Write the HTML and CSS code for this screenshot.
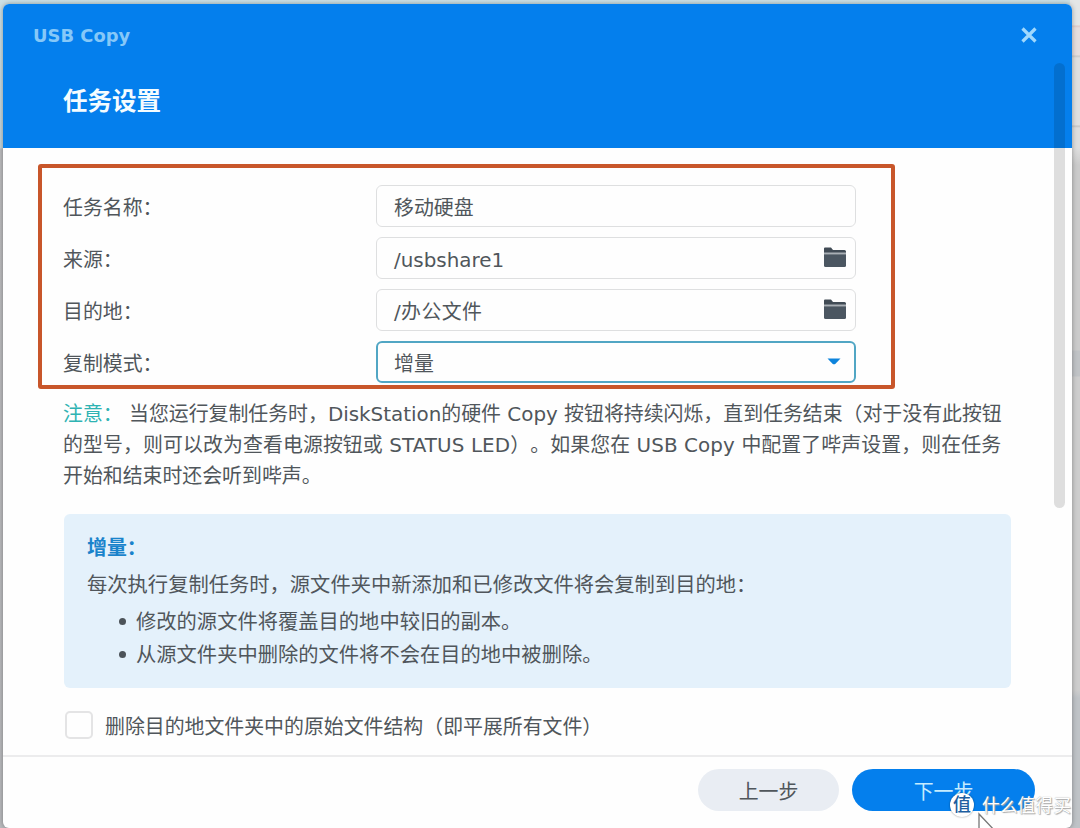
FILE: index.html
```html
<!DOCTYPE html>
<html lang="zh-CN">
<head>
<meta charset="utf-8">
<title>USB Copy</title>
<link rel="stylesheet" href="styles.css">
</head>
<body>
<div class="backdrop-right"></div>
<main class="dialog">
  <header class="header">
    <div class="titlebar">
      <span class="app-name">USB Copy</span>
      <svg class="close" width="18" height="18" viewBox="0 0 18 18"><path d="M2.500 2.500L15.500 15.500M15.500 2.500L2.500 15.500" stroke="#a0d8fd" stroke-width="3.200"/></svg>
    </div>
    <h1 class="page-title">任务设置</h1>
  </header>
  <section class="body">
    <div class="form">
      <div class="row"><label class="label">任务名称：</label><div class="field">移动硬盘</div></div>
      <div class="row"><label class="label">来源：</label><div class="field"><span>/usbshare1</span>
        <svg class="folder" width="22" height="20" viewBox="0 0 22 20"><path d="M0 6V1.500Q0 .5 1 .5H7L9 3H20.500Q22 3 22 4.500V6Z" fill="#414b55"/><path d="M0 5.500H22V7.200H0Z" fill="#a9afb5"/><path d="M0 7.200H22V18.500Q22 20 20.500 20H1.500Q0 20 0 18.500Z" fill="#4b5661"/></svg></div></div>
      <div class="row"><label class="label">目的地：</label><div class="field"><span class="path">/办公文件</span>
        <svg class="folder" width="22" height="20" viewBox="0 0 22 20"><path d="M0 6V1.500Q0 .5 1 .5H7L9 3H20.500Q22 3 22 4.500V6Z" fill="#414b55"/><path d="M0 5.500H22V7.200H0Z" fill="#a9afb5"/><path d="M0 7.200H22V18.500Q22 20 20.500 20H1.500Q0 20 0 18.500Z" fill="#4b5661"/></svg></div></div>
      <div class="row"><label class="label">复制模式：</label><div class="field field-active"><span>增量</span>
        <svg class="caret" width="14" height="7" viewBox="0 0 14 7"><path d="M.5 .5H13.500L8.500 5.700Q7 7 5.500 5.700Z" fill="#0d84dc"/></svg></div></div>
    </div>
    <div class="notice">
      <div class="line"><span class="note">注意：</span> 当您运行复制任务时，DiskStation的硬件 Copy 按钮将持续闪烁，直到任务结束（对于没有此按钮</div>
      <div class="line line-wide">的型号，则可以改为查看电源按钮或 STATUS LED）。如果您在 USB Copy 中配置了哔声设置，则在任务</div>
      <div class="line">开始和结束时还会听到哔声。</div>
    </div>
    <div class="info">
      <div class="info-title">增量：</div>
      <div class="info-text">每次执行复制任务时，源文件夹中新添加和已修改文件将会复制到目的地：</div>
      <ul class="list">
        <li>修改的源文件将覆盖目的地中较旧的副本。</li>
        <li>从源文件夹中删除的文件将不会在目的地中被删除。</li>
      </ul>
    </div>
    <div class="check-row"><span class="checkbox"></span><span class="check-label">删除目的地文件夹中的原始文件结构（即平展所有文件）</span></div>
  </section>
  <footer class="footer">
    <div class="button">上一步</div>
    <div class="button primary">下一步</div>
  </footer>
  <div class="scrollbar"></div>
</main>
<svg class="cursor" width="22" height="16" viewBox="0 0 22 16"><path d="M2 28V2L20 21" fill="#fff" stroke="#777" stroke-width="1.300"/></svg>
<div class="watermark"><span class="badge">值</span><span class="brand">什么值得买</span></div>
</body>
</html>
```
FILE: styles.css
```css
* { box-sizing: border-box; }
body {
  margin: 0;
  width: 1080px;
  height: 828px;
  overflow: hidden;
  position: relative;
  padding: 4px 9px 1px 3px;
  background: linear-gradient(#cce0e5 0, #c3d2d8 148px, #bcbcbe 149px, #b9babd 100%);
  font-family: "DejaVu Sans", "Noto Sans CJK SC", sans-serif;
  font-size: 19.9px;
  line-height: 30px;
  text-spacing-trim: space-all;
  color: #50565b;
}
.backdrop-right {
  position: absolute;
  left: 1070px;
  top: 0;
  width: 10px;
  height: 828px;
  background: linear-gradient(#e4e6e6 0 25px, #ddc9c8 26px, #e6dede 28px 55px, #c9c9c9 56px, #e0e0e0 58px 125px, #c4c4c4 126px, #dedede 128px 148px, #cbcbcb 165px 350px, #c0c3c6 351px 376px, #cdcdcd 377px 690px, #bfc3c7 698px 100%);
}
.dialog {
  position: relative;
  display: flex;
  flex-direction: column;
  width: 1069px;
  height: 824px;
  border-radius: 6px;
  background: #fefefe;
  overflow: hidden;
  box-shadow: 0 0 5px rgba(0, 0, 0, .35);
}
.header { height: 144px; flex: none; background: #047fed; padding: 18px 32px 0 30px; }
.titlebar { display: flex; align-items: center; justify-content: space-between; height: 26px; }
.app-name { padding-top: 2px; font-weight: 700; font-size: 17.900px; color: #86c8f8; }
.close { margin-right: 2px; }
.page-title { margin: 38px 0 0 30px; font-size: 24.500px; line-height: 32px; font-weight: 700; color: #f4fcff; }
.body { flex: none; height: 607px; padding: 16px 60px 0 35px; }
.form {
  width: 857px;
  height: 225px;
  border: 4px solid #c8562a;
  border-radius: 3px;
  padding: 17px 0 0 21px;
  display: flex;
  flex-direction: column;
  gap: 10px;
}
.row { display: flex; flex: none; height: 42px; align-items: center; }
.label { width: 313px; flex: none; padding-top: 6px; }
.field {
  width: 480px;
  height: 42px;
  border: 1px solid #dedfe0;
  border-radius: 6px;
  padding: 5px 9px 0 17px;
  display: flex;
  align-items: center;
  justify-content: space-between;
}
.path { letter-spacing: .4px; }
.folder { margin-top: -7px; }
.field-active { border: 2px solid #51a6c4; padding: 5px 13px 0 16px; }
.caret { margin-top: -6px; }
.notice { margin: 10px 0 0 25px; }
.line { height: 31px; line-height: 31px; white-space: nowrap; }
.line-wide { letter-spacing: .1px; }
.note { color: #2fb3b3; }
.info {
  margin: 22px 0 0 26px;
  width: 947px;
  height: 174px;
  border-radius: 6px;
  background: #e4f1fb;
  padding: 18px 23px 0;
}
.info-title { height: 33px; line-height: 34px; font-weight: 700; color: #1983cb; }
.info-text { height: 40px; line-height: 40px; font-size: 20.300px; white-space: nowrap; }
.list { margin: 0; padding: 0; list-style: none; font-size: 20.300px; }
.list li { display: flex; align-items: center; height: 33px; gap: 10px; padding-left: 32px; }
.list li::before { content: ""; width: 7px; height: 7px; border-radius: 50%; background: #4c5359; }
.check-row { display: flex; align-items: center; height: 30px; margin: 22px 0 0 27px; gap: 12px; }
.check-label { padding-top: 5px; }
.checkbox { width: 28px; height: 28px; border: 2px solid #e4e4e5; border-radius: 5px; }
.footer {
  flex: 1;
  display: flex;
  gap: 13px;
  justify-content: flex-end;
  padding: 12px 37px 0 0;
  border-top: 2px solid #ececed;
}
.button {
  width: 141px;
  height: 42px;
  border-radius: 21px;
  background: #e9edf3;
  display: flex;
  align-items: center;
  justify-content: center;
  padding-top: 6px;
}
.primary { width: 183px; background: #047fed; color: #c5ecff; }
.scrollbar {
  position: absolute;
  left: 1051px;
  top: 59px;
  width: 11px;
  height: 445px;
  border-radius: 6px;
  background: rgba(0, 0, 0, .125);
}
.cursor { position: absolute; left: 977px; top: 812px; }
.watermark { position: absolute; left: 950px; top: 792px; display: flex; align-items: center; gap: 8px; }
.badge {
  width: 24px;
  height: 24px;
  border-radius: 50%;
  background: #fff;
  color: #1d5ea0;
  font-size: 18px;
  font-weight: 500;
  line-height: 23px;
  text-align: center;
  box-shadow: 0 0 2px rgba(0, 0, 0, .45);
}
.brand { padding-top: 2px; font-size: 17.800px; line-height: 24px; color: #fff; white-space: nowrap; text-shadow: 0 0 1px #999, 1px 1px 1px #aaa; }
```
